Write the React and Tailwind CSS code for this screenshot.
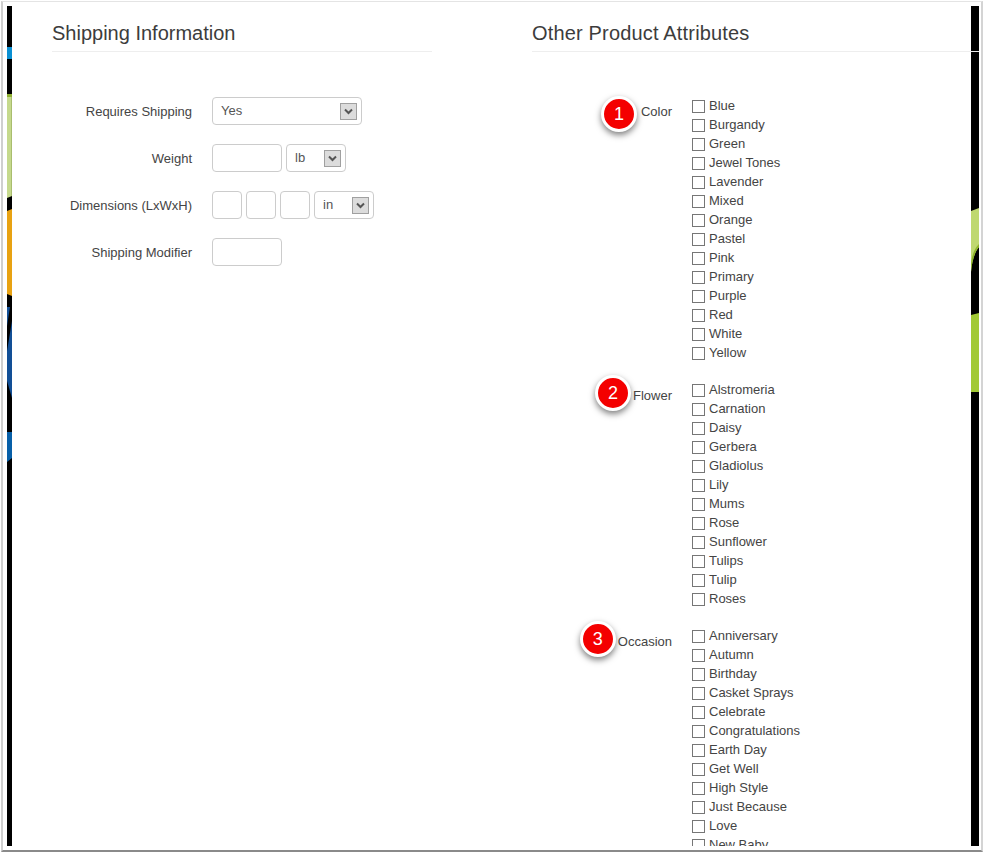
import React from "react";

const font = { sans: "font-['Liberation_Sans',Arial,sans-serif]" };

const groups = [
  {
    label: "Color",
    badge: 1,
    badgeClass: "mr-[4px] -top-[6px]",
    options: ["Blue", "Burgandy", "Green", "Jewel Tones", "Lavender", "Mixed", "Orange", "Pastel", "Pink", "Primary", "Purple", "Red", "White", "Yellow"],
  },
  {
    label: "Flower",
    badge: 2,
    badgeClass: "mr-[2px] -top-[11px]",
    options: ["Alstromeria", "Carnation", "Daisy", "Gerbera", "Gladiolus", "Lily", "Mums", "Rose", "Sunflower", "Tulips", "Tulip", "Roses"],
  },
  {
    label: "Occasion",
    badge: 3,
    badgeClass: "mr-[2px] -top-[11px]",
    options: ["Anniversary", "Autumn", "Birthday", "Casket Sprays", "Celebrate", "Congratulations", "Earth Day", "Get Well", "High Style", "Just Because", "Love", "New Baby"],
  },
];

const LeftStrip = () => (
  <svg className="block w-[5px] h-[840px] shrink-0" viewBox="0 0 5 840" preserveAspectRatio="none">
    <rect width="5" height="840" fill="#000" />
    <rect y="41" width="5" height="12" fill="#0a8fd2" />
    <path d="M0 88 H5 V190 L0 192 Z" fill="#c5d98c" />
    <rect y="88" width="5" height="3" fill="#8fb032" />
    <rect x="4" y="91" width="1" height="99" fill="#a9bd6e" />
    <path d="M0 205 L5 203 V290 L0 288 Z" fill="#e8a212" />
    <path d="M0 301 H3 L0 320 Z" fill="#124f96" />
    <path d="M5 315 V392 L0 375 V345 Z" fill="#124f96" />
    <path d="M0 426 H5 V452 L0 456 Z" fill="#075fa8" />
  </svg>
);

const RightStrip = () => (
  <svg className="block w-[8px] h-[840px] shrink-0" viewBox="0 0 8 840" preserveAspectRatio="none">
    <rect width="8" height="840" fill="#000" />
    <path d="M0 205 L8 202 V241 C4 245 1 255 0 266 Z" fill="#bfd870" />
    <path d="M8 241 C4 245 1 255 0 266 V258 C1 248 4 242 8 238 Z" fill="#8fb52c" />
    <path d="M0 309 L8 307 V386 H0 Z" fill="#a2c935" />
  </svg>
);

const Arrow = () => (
  <span className="flex items-center justify-center w-[17px] h-[17px] bg-[#dcdcdc] border border-[#a0a0a0]">
    <svg width="9" height="7" viewBox="0 0 9 7">
      <path d="M1 1.5 L4.5 5 L8 1.5" fill="none" stroke="#555" strokeWidth="2" />
    </svg>
  </span>
);

const Select = ({ value, width }) => (
  <div className={`flex items-center justify-between h-[28px] pl-[8px] pr-[4px] bg-white border border-[#cccccc] rounded-[4px] ${width}`}>
    <span className="text-[13px] leading-none -mt-[2px] text-[#555555]">{value}</span>
    <Arrow />
  </div>
);

const Input = ({ width }) => (
  <div className={`h-[28px] bg-white border border-[#cccccc] rounded-[4px] ${width}`} />
);

const FormRow = ({ label, children }) => (
  <div className="flex items-center h-[28px]">
    <label className="w-[140px] mr-[20px] pt-[2px] text-right text-[13px] text-[#444444] whitespace-nowrap">{label}</label>
    <div className="flex gap-[4px]">{children}</div>
  </div>
);

const Heading = ({ children, className }) => (
  <h2 className={`h-[46px] pt-[14px] text-[20px] leading-[26px] text-[#3c3c3c] border-b border-[#eeeeee] whitespace-nowrap ${className}`}>
    {children}
  </h2>
);

const Badge = ({ n, className }) => (
  <span className={`absolute right-full flex items-center justify-center w-[36px] h-[36px] pb-[1px] rounded-full bg-[#f40000] border-[3px] border-white text-white text-[18px] shadow-[0_3px_6px_rgba(0,0,0,0.5)] ${className}`}>
    {n}
  </span>
);

const AttributeGroup = ({ label, badge, badgeClass, options }) => (
  <div className="flex">
    <div className="w-[140px] text-right pt-[3px] shrink-0">
      <span className="relative inline-block text-[13px] leading-[20px] text-[#444444]">
        <Badge n={badge} className={badgeClass} />
        {label}
      </span>
    </div>
    <div className="ml-[20px] flex flex-col">
      {options.map((opt) => (
        <label key={opt} className="flex items-center h-[19px] text-[13px] text-[#444444] whitespace-nowrap">
          <input type="checkbox" className="appearance-none w-[13px] h-[13px] mt-[2px] border border-[#767676] bg-white mr-[4px] shrink-0" />
          {opt}
        </label>
      ))}
    </div>
  </div>
);

export default function App() {
  return (
    <div className={`w-[985px] h-[854px] bg-white pl-[1px] pt-[1px] pr-[2px] pb-[2px] overflow-hidden ${font.sans}`}>
      <div className="h-[851px] bg-white border-l-2 border-r-2 border-t border-b-2 border-t-[#e4e4e4] border-l-[#cfcfcf] border-r-[#d4d4d4] border-b-[#8a8a8a] pt-[4px] pl-[4px] pr-[2px]">
        <div className="flex h-[840px] overflow-hidden">
          <LeftStrip />
          <main className="relative flex-1 min-w-0 flex pl-[40px]">
            <section className="w-[380px] shrink-0">
              <Heading>Shipping Information</Heading>
              <div className="mt-[45px] flex flex-col gap-[19px]">
                <FormRow label="Requires Shipping">
                  <Select value="Yes" width="w-[150px]" />
                </FormRow>
                <FormRow label="Weight">
                  <Input width="w-[70px]" />
                  <Select value="lb" width="w-[60px]" />
                </FormRow>
                <FormRow label="Dimensions (LxWxH)">
                  <Input width="w-[30px]" />
                  <Input width="w-[30px]" />
                  <Input width="w-[30px]" />
                  <Select value="in" width="w-[60px]" />
                </FormRow>
                <FormRow label="Shipping Modifier">
                  <Input width="w-[70px]" />
                </FormRow>
              </div>
            </section>
            <section className="ml-[100px] flex-1 min-w-0">
              <Heading className="-mr-[8px] relative z-10 tracking-[0.17px]">Other Product Attributes</Heading>
              <div className="mt-[44px] flex flex-col gap-[18px]">
                {groups.map((g) => (
                  <AttributeGroup key={g.label} {...g} />
                ))}
              </div>
            </section>
          </main>
          <RightStrip />
        </div>
      </div>
    </div>
  );
}
